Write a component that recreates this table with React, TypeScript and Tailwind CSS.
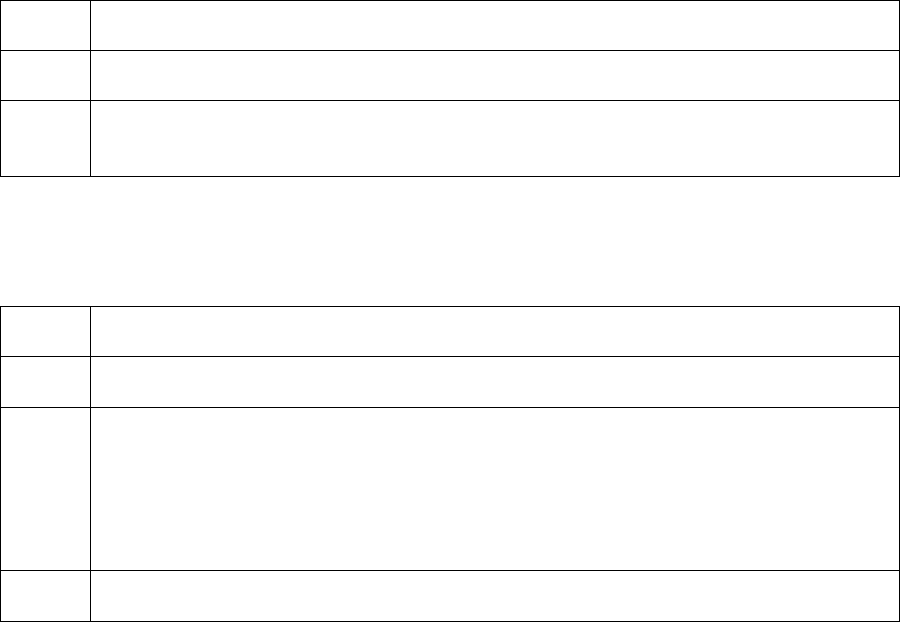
import React from 'react';

interface TableSpec {
    rows: number[]; // row heights in px (including bottom border)
}

// Empty two-column grid table with black 1px rules
const EmptyTable: React.FC<{ heights: string[] }> = ({ heights }) => (
    <div className="w-[900px] border border-black">
        {heights.map((h, i) => (
            <div
                key={i}
                className={`flex ${h} ${i < heights.length - 1 ? 'border-b border-black' : ''}`}
            >
                <div className="w-[90px] shrink-0 border-r border-black" />
                <div className="flex-1" />
            </div>
        ))}
    </div>
);

export default function App() {
    return (
        <div className="min-h-screen bg-white font-['Liberation_Sans',sans-serif]">
            <EmptyTable heights={['h-[50px]', 'h-[50px]', 'h-[75px]']} />
            <div className="mt-[129px]">
                <EmptyTable heights={['h-[50px]', 'h-[51px]', 'h-[163px]', 'h-[50px]']} />
            </div>
        </div>
    );
}
